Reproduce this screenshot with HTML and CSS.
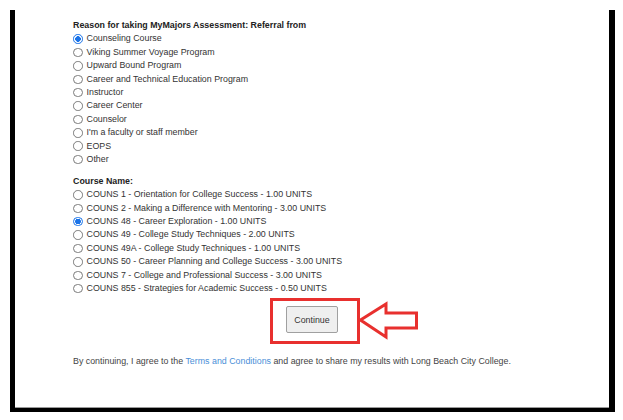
FILE: index.html
```html
<!DOCTYPE html>
<html>
<head>
<meta charset="utf-8">
<link rel="stylesheet" href="styles.css">
</head>
<body>
<div class="frame">
  <div class="content">
    <div class="group">
      <div class="label">Reason for taking MyMajors Assessment: Referral from</div>
      <label class="opt"><span class="radio checked"></span>Counseling Course</label>
      <label class="opt"><span class="radio"></span>Viking Summer Voyage Program</label>
      <label class="opt"><span class="radio"></span>Upward Bound Program</label>
      <label class="opt"><span class="radio"></span>Career and Technical Education Program</label>
      <label class="opt"><span class="radio"></span>Instructor</label>
      <label class="opt"><span class="radio"></span>Career Center</label>
      <label class="opt"><span class="radio"></span>Counselor</label>
      <label class="opt"><span class="radio"></span>I'm a faculty or staff member</label>
      <label class="opt"><span class="radio"></span>EOPS</label>
      <label class="opt"><span class="radio"></span>Other</label>
    </div>
    <div class="group second">
      <div class="label">Course Name:</div>
      <label class="opt"><span class="radio"></span>COUNS 1 - Orientation for College Success - 1.00 UNITS</label>
      <label class="opt"><span class="radio"></span>COUNS 2 - Making a Difference with Mentoring - 3.00 UNITS</label>
      <label class="opt"><span class="radio checked"></span>COUNS 48 - Career Exploration - 1.00 UNITS</label>
      <label class="opt"><span class="radio"></span>COUNS 49 - College Study Techniques - 2.00 UNITS</label>
      <label class="opt"><span class="radio"></span>COUNS 49A - College Study Techniques - 1.00 UNITS</label>
      <label class="opt"><span class="radio"></span>COUNS 50 - Career Planning and College Success - 3.00 UNITS</label>
      <label class="opt"><span class="radio"></span>COUNS 7 - College and Professional Success - 3.00 UNITS</label>
      <label class="opt"><span class="radio"></span>COUNS 855 - Strategies for Academic Success - 0.50 UNITS</label>
    </div>
    <div class="actions">
      <div class="btn-wrap">
        <button class="btn">Continue</button>
        <div class="highlight"></div>
        <svg class="arrow" width="62" height="42" viewBox="0 0 62 42">
          <path d="M2.5 20 L28 4 L28 13 L58.5 13 L58.5 28 L28 28 L28 37 Z" fill="#fff" stroke="#e8302e" stroke-width="3" stroke-linejoin="miter"/>
        </svg>
      </div>
    </div>
    <p class="terms">By continuing, I agree to the <a href="#">Terms and Conditions</a> and agree to share my results with Long Beach City College.</p>
  </div>
</div>
</body>
</html>
```

FILE: styles.css
```css
html, body {
  margin: 0;
  padding: 0;
  background: #fff;
}
body {
  font-family: "Liberation Sans", Arial, sans-serif;
  font-size: 8.85px;
  color: #333;
}
.frame {
  margin: 10px 0 0 10px;
  width: 594px;
  height: 398px;
  border-left: 5px solid #000;
  border-right: 6px solid #000;
  border-bottom: 4px solid #000;
  box-shadow: inset 0 -1px 0 #9a9a9a;
}
.content {
  padding: 9px 0 0 58px;
}
.label {
  font-weight: bold;
  line-height: 13.4px;
  color: #222;
}
.opt {
  display: flex;
  align-items: center;
  height: 13.4px;
  line-height: 13.4px;
  white-space: nowrap;
}
.second {
  margin-top: 8.5px;
}
.radio {
  box-sizing: border-box;
  width: 9.5px;
  height: 9.5px;
  border: 1px solid #7a7a7a;
  border-radius: 50%;
  margin: 0 4px 0 0;
  flex: none;
  background: #fff;
}
.radio.checked {
  border-color: #1a73e8;
  background: radial-gradient(circle, #1a73e8 0 2.6px, #fff 3px);
}
.actions {
  display: flex;
  justify-content: center;
  margin: 11px 0 0 -58px;
}
.btn-wrap {
  position: relative;
}
.btn {
  display: block;
  width: 52px;
  height: 27px;
  padding: 0;
  background: #efefef;
  border: 1px solid #a0a0a0;
  border-radius: 2px;
  font-family: "Liberation Sans", Arial, sans-serif;
  font-size: 8.85px;
  color: #333;
}
.highlight {
  position: absolute;
  left: -16px;
  top: -8px;
  width: 84px;
  height: 40px;
  border: 3px solid #e8302e;
}
.arrow {
  position: absolute;
  left: 72px;
  top: -6px;
}
.terms {
  margin: 22px 0 0;
  line-height: 13px;
  color: #444;
}
.terms a {
  color: #4a8fd8;
  text-decoration: none;
}
```
